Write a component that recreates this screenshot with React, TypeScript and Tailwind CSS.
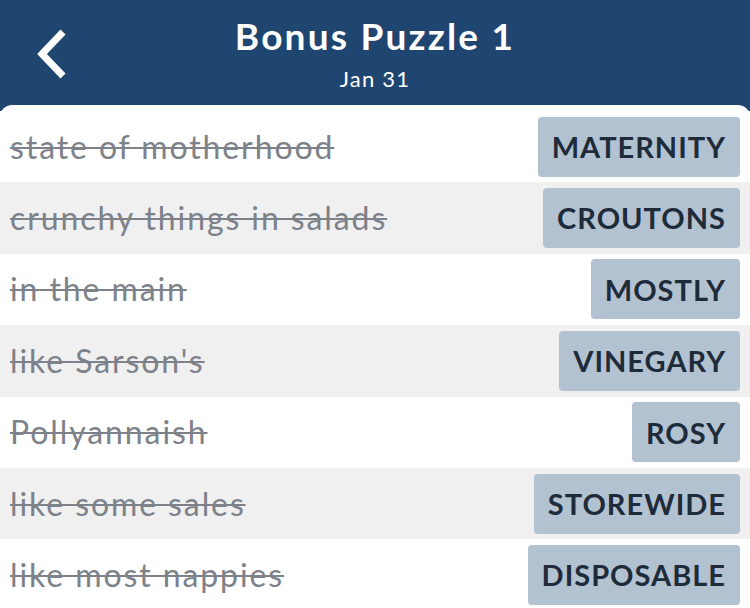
import React from "react";

const rows = [
  ["state of motherhood", "MATERNITY"],
  ["crunchy things in salads", "CROUTONS"],
  ["in the main", "MOSTLY"],
  ["like Sarson's", "VINEGARY"],
  ["Pollyannaish", "ROSY"],
  ["like some sales", "STOREWIDE"],
  ["like most nappies", "DISPOSABLE"],
];

export default function App() {
  return (
    <div
      className="w-[750px] h-[608px] overflow-hidden bg-[#1f4571]"
      style={{ fontFamily: "Lato, 'Open Sans', sans-serif" }}
    >
      <div className="relative h-[105px] flex flex-col items-center text-white">
        <svg
          className="absolute left-[34px] top-[28px]"
          width="36"
          height="52"
          viewBox="0 0 36 52"
        >
          <path
            d="M29 4 L8 26 L29 48"
            fill="none"
            stroke="white"
            strokeWidth="7"
            strokeLinecap="butt"
            strokeLinejoin="miter"
          />
        </svg>
        <div className="mt-[14px] text-[37px] leading-[44px] font-bold tracking-[2.2px]">Bonus Puzzle 1</div>
        <div className="mt-[8px] text-[22px] leading-[26px] tracking-[1.2px]">Jan 31</div>
      </div>
      <div className="bg-white rounded-t-[12px] pt-[6px] h-[503px]">
        {rows.map(([clue, ans], i) => (
          <div
            key={i}
            className={`h-[71.4px] flex items-center justify-between pl-[10px] pr-[10px] ${
              i % 2 === 1 ? "bg-[#f0f0f0]" : "bg-white"
            }`}
          >
            <span className="text-[32px] tracking-[1.9px] text-[#7d828a] line-through decoration-[2px]">{clue}</span>
            <span className="h-[60px] flex items-center px-[14px] rounded-[4px] bg-[#b2c2d0] text-[#1e2b3a] text-[29px] tracking-[1px] font-bold">
              {ans}
            </span>
          </div>
        ))}
      </div>
    </div>
  );
}
